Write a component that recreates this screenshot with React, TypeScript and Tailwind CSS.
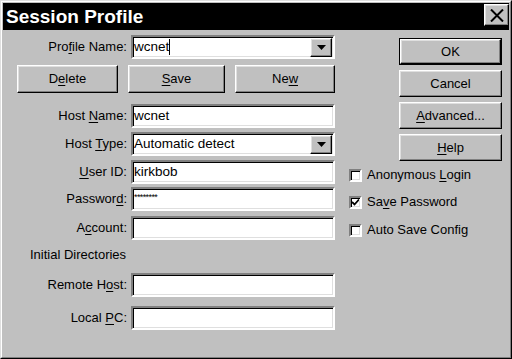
import React from 'react';

const raised =
  'border border-t-white border-l-white border-b-black border-r-black shadow-[inset_-1px_-1px_0_#808080,inset_1px_1px_0_#dfdfdf] bg-[#c0c0c0]';
const sunken =
  'bg-white border-2 border-t-[#808080] border-l-[#808080] border-b-white border-r-white shadow-[inset_1px_1px_0_#000,inset_-1px_-1px_0_#dfdfdf]';

const U: React.FC<{ children: React.ReactNode }> = ({ children }) => (
  <span className="underline decoration-1 underline-offset-[2px]">{children}</span>
);

const Field: React.FC<{ label: React.ReactNode; className: string; children: React.ReactNode }> = ({
  label,
  className,
  children,
}) => (
  <div className={`flex items-center gap-[4px] ${className}`}>
    <div className="w-[124px] text-right">{label}</div>
    {children}
  </div>
);

const TextBox: React.FC<{ value?: React.ReactNode }> = ({ value }) => (
  <div className={`w-[204px] h-[24px] ${sunken} flex items-center pl-px text-[13.5px]`}>{value}</div>
);

const Combo: React.FC<{ value: string; cursor?: boolean }> = ({ value, cursor }) => (
  <div className={`w-[204px] h-[24px] ${sunken} flex items-center pl-px pr-px text-[13.5px]`}>
    <span>{value}</span>
    {cursor && <span className="w-px h-[16px] bg-black" />}
    <div className="flex-1" />
    <div className={`w-[22px] h-[19px] ${raised} flex items-center justify-center`}>
      <svg width="9" height="5" viewBox="0 0 9 5">
        <polygon points="0,0 9,0 4.5,5" fill="black" />
      </svg>
    </div>
  </div>
);

const Btn: React.FC<{ className: string; children: React.ReactNode; def?: boolean }> = ({
  className,
  children,
  def,
}) =>
  def ? (
    <div className={`border border-black ${className}`}>
      <div className={`w-full h-full ${raised} flex items-center justify-center`}>{children}</div>
    </div>
  ) : (
    <div className={`${raised} flex items-center justify-center ${className}`}>{children}</div>
  );

const Check: React.FC<{ className: string; checked?: boolean; children: React.ReactNode }> = ({
  className,
  checked,
  children,
}) => (
  <div className={`flex items-center gap-[5px] h-[14px] ${className}`}>
    <div className={`w-[13px] h-[13px] ${sunken} flex items-center justify-center`}>
      {checked && (
        <svg width="7" height="7" viewBox="0 0 7 7">
          <polyline points="0,3 2.5,5.5 7,0.5" fill="none" stroke="black" strokeWidth="1.8" />
        </svg>
      )}
    </div>
    <span>{children}</span>
  </div>
);

export default function App() {
  return (
    <div className="w-[512px] h-[359px] bg-[#c0c0c0] border border-t-[#dfdfdf] border-l-[#dfdfdf] border-r-black border-b-black font-['Liberation_Sans',Arial,sans-serif] text-[13px] text-black leading-[16px]">
      <div className="h-full border border-t-white border-l-white border-r-[#808080] border-b-[#808080] p-px flex flex-col">
        <div className="h-[27px] bg-black flex items-start justify-between pl-[3px]">
          <span className="text-white font-bold text-[19px] leading-[27px]">Session Profile</span>
          <div className={`mt-px w-[25px] h-[22px] ${raised} flex items-center justify-center`}>
            <svg width="14" height="13" viewBox="0 0 14 13">
              <path d="M1 0.5 L13 12.5 M13 0.5 L1 12.5" stroke="black" strokeWidth="2" />
            </svg>
          </div>
        </div>
        <div className="flex-1 flex">
          <div className="flex flex-col w-[332px]">
            <Field className="mt-[5px]" label={<>Pro<U>f</U>ile Name:</>}>
              <Combo value="wcnet" cursor />
            </Field>
            <div className="mt-[6px] flex gap-[10px] pl-[14px] h-[28px]">
              <Btn className="w-[102px]">
                D<U>e</U>lete
              </Btn>
              <Btn className="w-[98px]">
                <U>S</U>ave
              </Btn>
              <Btn className="w-[101px]">
                Ne<U>w</U>
              </Btn>
            </div>
            <Field className="mt-[11px]" label={<>Host <U>N</U>ame:</>}>
              <TextBox value="wcnet" />
            </Field>
            <Field className="mt-[4px]" label={<>Host <U>T</U>ype:</>}>
              <Combo value="Automatic detect" />
            </Field>
            <Field className="mt-[4px]" label={<><U>U</U>ser ID:</>}>
              <TextBox value="kirkbob" />
            </Field>
            <Field className="mt-[3px]" label={<>Passwor<U>d</U>:</>}>
              <TextBox value={<span className="text-[9px] tracking-[-0.6px] leading-[9px] -mt-[3px]">********</span>} />
            </Field>
            <Field className="mt-[5px]" label={<>A<U>c</U>count:</>}>
              <TextBox />
            </Field>
            <div className="mt-[7px] pl-[27px]">Initial Directories</div>
            <Field className="mt-[10px]" label={<>Remote H<U>o</U>st:</>}>
              <TextBox />
            </Field>
            <Field className="mt-[9px]" label={<>Local <U>P</U>C:</>}>
              <TextBox />
            </Field>
          </div>
          <div className="flex flex-col ml-[14px]">
            <div className="ml-[50px] mt-[8px] flex flex-col gap-[5px]">
              <Btn def className="w-[103px] h-[27px]">OK</Btn>
              <Btn className="w-[103px] h-[27px]">Cancel</Btn>
              <Btn className="w-[103px] h-[27px]">
                <U>A</U>dvanced...
              </Btn>
              <Btn className="w-[103px] h-[27px]">
                <U>H</U>elp
              </Btn>
            </div>
            <Check className="mt-[7px]">
              Anonymous <U>L</U>ogin
            </Check>
            <Check className="mt-[13px]" checked>
              Sa<U>v</U>e Password
            </Check>
            <Check className="mt-[14px]">Auto Save Config</Check>
          </div>
        </div>
      </div>
    </div>
  );
}
